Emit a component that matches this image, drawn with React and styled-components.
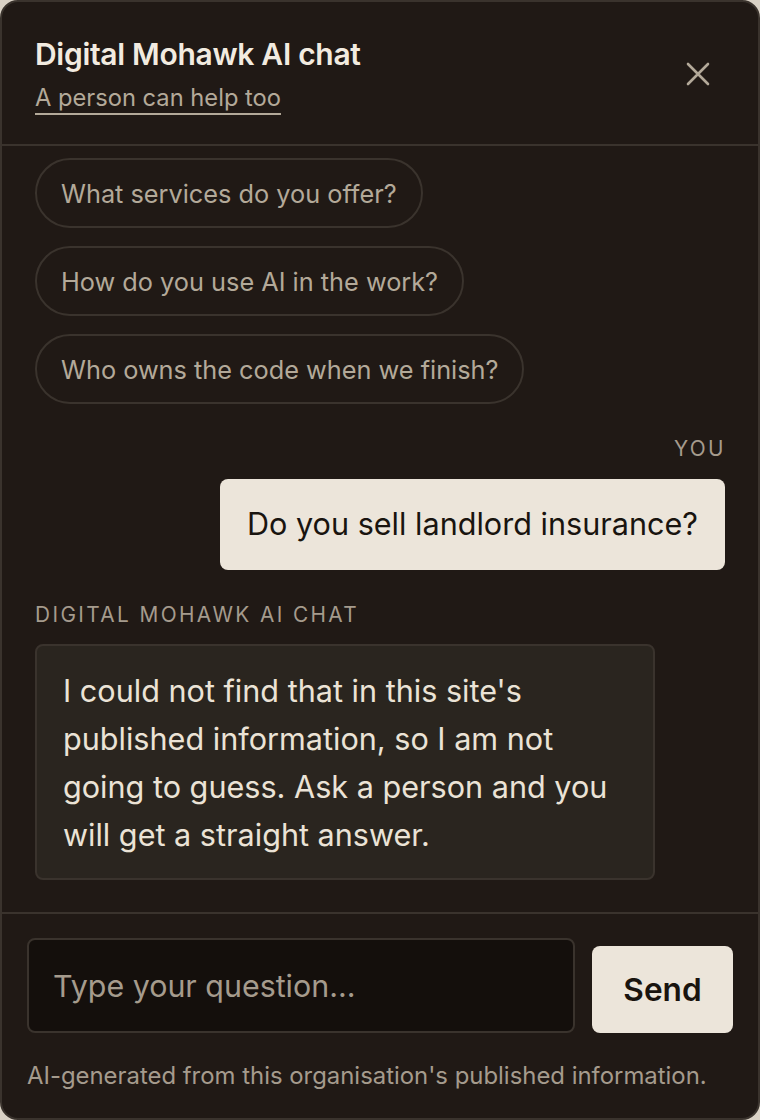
import React from "react"
import styled, { createGlobalStyle } from "styled-components"

const colors = {
  page: "#d9d1c5",
  panel: "#201915",
  line: "#3a332d",
  cream: "#ece5da",
  text: "#ebe3d6",
  muted: "#b3a999",
  dim: "#a59b8d",
  ink: "#19140f",
  bubble: "#2a251f",
  field: "#140f0c"
}

const GlobalStyle = createGlobalStyle`
  html, body {
    margin: 0;
    padding: 0;
    background: ${colors.page};
  }
  * {
    box-sizing: border-box;
  }
  body {
    font-family: Inter, "Liberation Sans", sans-serif;
  }
`

const Panel = styled.section`
  display: flex;
  flex-direction: column;
  height: 1120px;
  background: ${colors.panel};
  border: 2px solid ${colors.line};
  border-radius: 18px;
  overflow: hidden;
  color: ${colors.text};
`

const Header = styled.header`
  display: flex;
  align-items: center;
  justify-content: space-between;
  padding: 34px 48px 32px 33px;
  border-bottom: 2px solid ${colors.line};
`

const TitleBlock = styled.div`
  display: flex;
  flex-direction: column;
  gap: 12px;
`

const Title = styled.h1`
  margin: 0;
  font-size: 30px;
  font-weight: 600;
  line-height: 36px;
  letter-spacing: -0.3px;
  color: #f2ebe0;
`

const HelpLink = styled.a`
  align-self: flex-start;
  font-size: 23.7px;
  line-height: 28px;
  color: ${colors.muted};
  text-decoration: underline;
  text-underline-offset: 7px;
  text-decoration-thickness: 2px;
  cursor: pointer;
`

const CloseButton = styled.button`
  display: flex;
  padding: 0;
  border: 0;
  background: none;
  color: ${colors.muted};
  cursor: pointer;
`

const Messages = styled.div`
  flex: 1;
  display: flex;
  flex-direction: column;
  padding: 12px 33px 0;
  overflow: hidden;
`

const Chips = styled.div`
  display: flex;
  flex-direction: column;
  align-items: flex-start;
  gap: 18px;
`

const Chip = styled.button`
  height: 70px;
  padding: 0 24px;
  border: 2px solid ${colors.line};
  border-radius: 35px;
  background: transparent;
  font-family: Inter, "Liberation Sans", sans-serif;
  font-size: 25.3px;
  color: ${colors.muted};
  cursor: pointer;
`

const Sender = styled.div`
  font-size: 20.8px;
  line-height: 26px;
  letter-spacing: 2.4px;
  text-transform: uppercase;
  color: ${colors.dim};
  text-align: ${({ $right }) => ($right ? "right" : "left")};
  margin: ${({ $right }) => ($right ? "32px -1px 17px 0" : "32px 0 16px")};
`

const Bubble = styled.div`
  line-height: 48px;
  font-size: 30.6px;
  border-radius: 8px;
  ${({ $mine }) =>
    $mine
      ? `
    align-self: flex-end;
    padding: 21px 27px 22px 27px;
    background: ${colors.cream};
    color: ${colors.ink};
  `
      : `
    align-self: flex-start;
    max-width: 620px;
    padding: 21px 32px 19px 26px;
    background: ${colors.bubble};
    border: 2px solid ${colors.line};
    color: ${colors.text};
  `}
`

const Composer = styled.footer`
  display: flex;
  flex-direction: column;
  gap: 28px;
  padding: 24px 25px 27px;
  border-top: 2px solid ${colors.line};
`

const Form = styled.form`
  display: flex;
  align-items: flex-end;
  gap: 17px;
  margin: 0;
`

const Field = styled.input`
  flex: 1;
  min-width: 0;
  height: 95px;
  padding: 0 24px;
  border: 2px solid ${colors.line};
  border-radius: 8px;
  background: ${colors.field};
  font-family: Inter, "Liberation Sans", sans-serif;
  font-size: 30.4px;
  color: ${colors.text};
  outline: none;
  &::placeholder {
    color: ${colors.dim};
  }
`

const SendButton = styled.button`
  width: 141px;
  height: 87px;
  border: 0;
  border-radius: 8px;
  background: ${colors.cream};
  font-family: Inter, "Liberation Sans", sans-serif;
  font-size: 31.6px;
  font-weight: 600;
  color: ${colors.ink};
  cursor: pointer;
`

const Disclaimer = styled.p`
  margin: 0;
  font-size: 23.9px;
  line-height: 30px;
  color: ${colors.dim};
`

const suggestions = [
  "What services do you offer?",
  "How do you use AI in the work?",
  "Who owns the code when we finish?"
]

export default function App() {
  return (
    <>
      <GlobalStyle />
      <Panel>
        <Header>
          <TitleBlock>
            <Title>Digital Mohawk AI chat</Title>
            <HelpLink>A person can help too</HelpLink>
          </TitleBlock>
          <CloseButton aria-label="Close">
            <svg width="24" height="24" viewBox="0 0 24 24" fill="none" stroke="currentColor" strokeWidth="2.6" strokeLinecap="round">
              <path d="M2 2 L22 22 M22 2 L2 22" />
            </svg>
          </CloseButton>
        </Header>
        <Messages>
          <Chips>
            {suggestions.map((s) => (
              <Chip key={s}>{s}</Chip>
            ))}
          </Chips>
          <Sender $right>You</Sender>
          <Bubble $mine>Do you sell landlord insurance?</Bubble>
          <Sender>Digital Mohawk AI chat</Sender>
          <Bubble>
            I could not find that in this site's published information, so I am not going to guess. Ask a person and you will get a straight answer.
          </Bubble>
        </Messages>
        <Composer>
          <Form onSubmit={(e) => e.preventDefault()}>
            <Field placeholder="Type your question..." />
            <SendButton type="submit">Send</SendButton>
          </Form>
          <Disclaimer>AI-generated from this organisation's published information.</Disclaimer>
        </Composer>
      </Panel>
    </>
  )
}
